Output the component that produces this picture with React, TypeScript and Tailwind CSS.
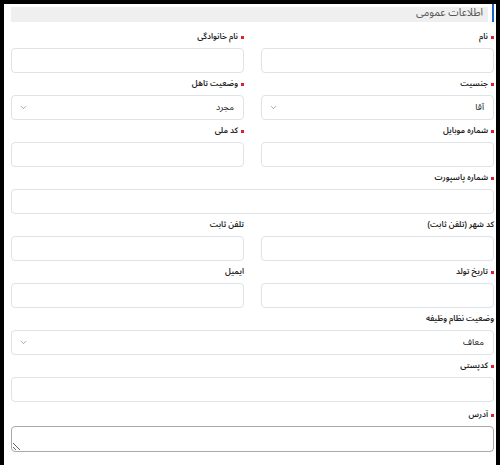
import { ChevronDown } from "lucide-react"

type FieldProps = {
  label: string
  required?: boolean
  kind?: "input" | "select" | "textarea"
  value?: string
  full?: boolean
}

const Field = ({ label, required, kind = "input", value, full }: FieldProps) => {
  return (
    <div className={(full ? "col-span-2 " : "") + (kind === "textarea" ? "mt-[2px]" : "")}>
      {/* عنوان فیلد */}
      <div className="flex items-center h-[14px] mb-[4px] text-[8px] font-semibold text-[#222] leading-[14px]">
        {required && <span className="w-[3px] h-[3px] bg-[#e0202a] ml-[3px] mt-[1px]" />}
        <span>{label}</span>
      </div>
      {kind === "input" && (
        <div className="h-[25px] border border-[#dfe2e6] rounded-[4px] bg-white" />
      )}
      {kind === "select" && (
        <div className="h-[25px] border border-[#dfe2e6] rounded-[4px] bg-white flex items-center justify-between pr-[9px] pl-[7px] text-[9px] text-[#222]">
          <span>{value}</span>
          <ChevronDown size={9} strokeWidth={1.5} className="text-[#666]" />
        </div>
      )}
      {kind === "textarea" && (
        <textarea
          dir="rtl"
          className="block w-full h-[26px] mt-[1px] border border-[#a9a9a9] rounded-[4px] bg-white resize-y"
        />
      )}
    </div>
  )
}

const App = () => {
  return (
    <div
      dir="rtl"
      className="w-[500px] h-[465px] bg-white border-t-[4px] border-x-[4px] border-black overflow-hidden pr-[2px] pl-[7px]"
      style={{
        fontFamily:
          '"Noto Sans Arabic", "Noto Naskh Arabic", "DejaVu Sans Condensed", "DejaVu Sans", sans-serif',
      }}
    >
      {/* سربرگ */}
      <div className="flex items-end gap-[4px] h-[18px]">
        <div className="w-[2px] h-[18px] bg-[#1e63c8]" />
        <div className="flex-1 h-[15px] bg-[#efefef] flex items-center pr-[5px] pb-[2px] text-[10.5px] text-[#555] leading-none">
          اطلاعات عمومی
        </div>
      </div>

      <div className="grid grid-cols-2 gap-x-[17px] gap-y-[4px] mt-[8px]">
        <Field label="نام" required />
        <Field label="نام خانوادگی" required />
        <Field label="جنسیت" required kind="select" value="آقا" />
        <Field label="وضعیت تاهل" required kind="select" value="مجرد" />
        <Field label="شماره موبایل" required />
        <Field label="کد ملی" required />
        <Field label="شماره پاسپورت" required full />
        <Field label="کد شهر (تلفن ثابت)" />
        <Field label="تلفن ثابت" />
        <Field label="تاریخ تولد" required />
        <Field label="ایمیل" />
        <Field label="وضعیت نظام وظیفه" kind="select" value="معاف" full />
        <Field label="کدپستی" required full />
        <Field label="آدرس" required kind="textarea" full />
      </div>
    </div>
  )
}

export default App
